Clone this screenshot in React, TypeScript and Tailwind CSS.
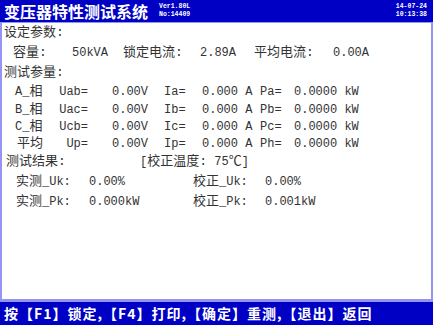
import type { ReactNode } from "react";

const MONO = "font-['Liberation_Mono','Noto_Sans_CJK_SC',monospace]";

function Z({ children }: { children: ReactNode }) {
  return <span className="text-[13px]">{children}</span>;
}

function Cell({ w, children, right = false }: { w: number; children?: ReactNode; right?: boolean }) {
  return (
    <div className={`shrink-0 whitespace-pre ${right ? "text-right" : ""}`} style={{ width: w }}>
      {children}
    </div>
  );
}

interface PhaseRow {
  name: ReactNode;
  u: string;
  i: string;
  p: string;
}

const phases: PhaseRow[] = [
  { name: <>A_<Z>相</Z></>, u: "Uab=", i: "Ia=", p: "Pa=" },
  { name: <>B_<Z>相</Z></>, u: "Uac=", i: "Ib=", p: "Pb=" },
  { name: <>C_<Z>相</Z></>, u: "Ucb=", i: "Ic=", p: "Pc=" },
  { name: <span className="pl-[2px]"><Z>平均</Z></span>, u: "Up=", i: "Ip=", p: "Ph=" },
];

export default function App() {
  return (
    <div className={`w-[433px] h-[325px] flex flex-col bg-white text-[12px] text-[#333333] ${MONO}`}>
      {/* Title bar */}
      <div className="h-[22px] shrink-0 bg-[#0000c4] flex items-center px-[4px] text-white">
        <div className="text-[16px] font-bold leading-none font-['Noto_Sans_CJK_SC',sans-serif]">
          变压器特性测试系统
        </div>
        <div className="ml-[11px] text-[6.5px] leading-[8px] font-bold">
          <div>Ver1.80L</div>
          <div>No:14409</div>
        </div>
        <div className="ml-auto mr-[2px] text-[6.5px] leading-[8px] font-bold text-right">
          <div>14-07-24</div>
          <div>10:13:38</div>
        </div>
      </div>

      {/* Body */}
      <div className="flex-1 border-x-2 border-b-[3px] border-t border-[#9494f4] flex flex-col">
        <div className="h-[20px] flex items-center pl-[2px]">
          <Z>设定参数:</Z>
        </div>
        <div className="h-[20px] flex items-center pl-[11px]">
          <Cell w={59}><Z>容量:</Z></Cell>
          <Cell w={51}>50kVA</Cell>
          <Cell w={77}><Z>锁定电流:</Z></Cell>
          <Cell w={54}>2.89A</Cell>
          <Cell w={79}><Z>平均电流:</Z></Cell>
          <Cell w={50}>0.00A</Cell>
        </div>
        <div className="h-[20px] flex items-center pl-[2px]">
          <Z>测试参量:</Z>
        </div>
        <div className="flex flex-col">
          {phases.map((r, idx) => (
            <div key={idx} className={`${idx === 0 ? "h-[18px]" : "h-[17px]"} flex items-center pl-[13px]`}>
              <Cell w={34}>{r.name}</Cell>
              <Cell w={39} right>{r.u}</Cell>
              <Cell w={24} />
              <Cell w={52}>0.00V</Cell>
              <Cell w={38}>{r.i}</Cell>
              <Cell w={58}>0.000 A</Cell>
              <Cell w={34}>{r.p}</Cell>
              <Cell w={80}>0.0000 kW</Cell>
            </div>
          ))}
        </div>
        <div className="h-[20px] flex items-center pl-[4px]">
          <Cell w={134}><Z>测试结果:</Z></Cell>
          <Cell w={120}>[<Z>校正温度:</Z> 75<Z>℃</Z>]</Cell>
        </div>
        <div className="h-[20px] flex items-center pl-[14px]">
          <Cell w={73}><Z>实测</Z>_Uk:</Cell>
          <Cell w={104}>0.00%</Cell>
          <Cell w={72}><Z>校正</Z>_Uk:</Cell>
          <Cell w={80}>0.00%</Cell>
        </div>
        <div className="h-[20px] flex items-center pl-[14px]">
          <Cell w={73}><Z>实测</Z>_Pk:</Cell>
          <Cell w={104}>0.000kW</Cell>
          <Cell w={72}><Z>校正</Z>_Pk:</Cell>
          <Cell w={80}>0.001kW</Cell>
        </div>
      </div>

      {/* Footer */}
      <div className="h-[23px] shrink-0 bg-[#0000c4] flex items-center pl-[4px] text-white text-[14px] font-bold tracking-[1px] font-['Noto_Sans_CJK_SC',sans-serif] whitespace-pre">
        按【F1】锁定,【F4】打印,【确定】重测,【退出】返回
      </div>
    </div>
  );
}
